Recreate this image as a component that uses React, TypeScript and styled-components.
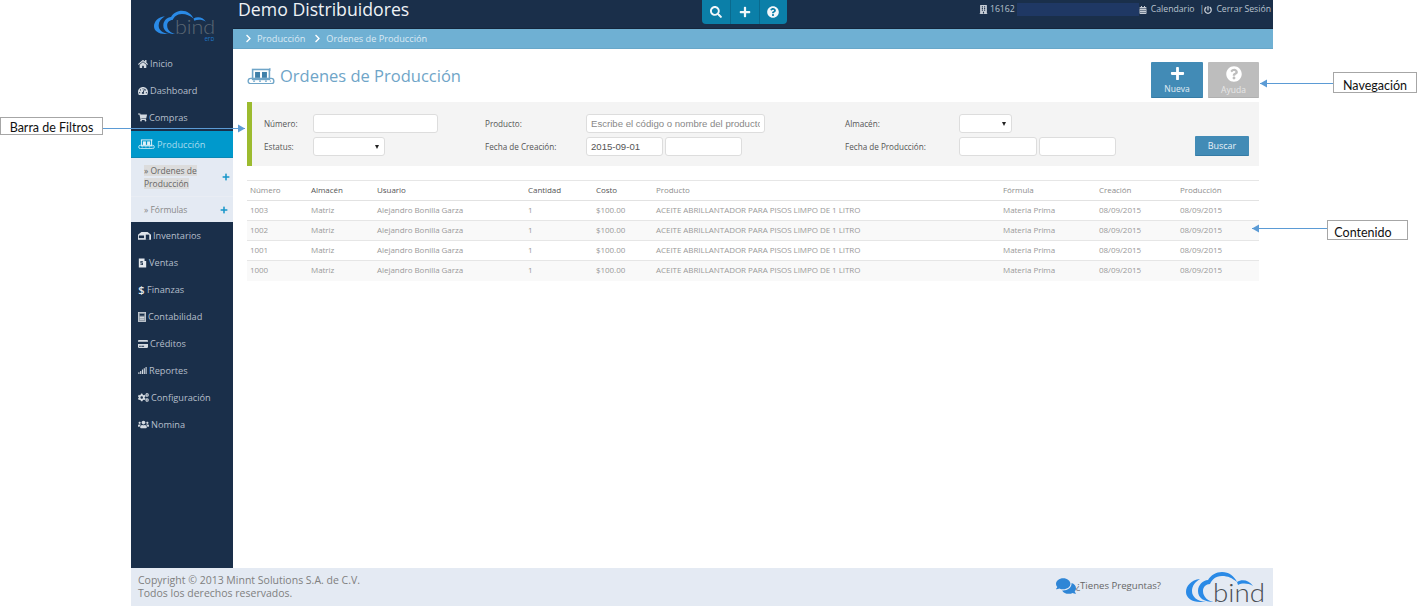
import React from "react";
import styled, { createGlobalStyle } from "styled-components";
import {
  FaHome, FaTachometerAlt, FaShoppingCart, FaCreditCard, FaSignal, FaCogs, FaUsers,
  FaSearch, FaPlus, FaQuestionCircle, FaCalendarAlt, FaPowerOff, FaChevronRight, FaComments, FaBuilding,
} from "react-icons/fa";

const Global = createGlobalStyle`
  html, body { margin: 0; padding: 0; background: #fff; overflow: hidden; }
  body { font-family: "Open Sans", "Noto Sans", sans-serif; }
  * { box-sizing: border-box; }
`;

const Page = styled.div`
  position: relative;
  width: 1417px;
  height: 606px;
  padding-left: 131px;
  overflow: hidden;
`;
const Frame = styled.div`
  width: 1142px;
  height: 606px;
  display: flex;
  flex-direction: column;
`;
const Shell = styled.div`
  flex: 1;
  display: flex;
  min-height: 0;
`;
const Sidebar = styled.nav`
  width: 102px;
  background: #1a2f4a;
  display: flex;
  flex-direction: column;
  flex-shrink: 0;
`;
const LogoBox = styled.div`
  height: 50px;
  padding: 10px 0 0 23px;
`;
const MenuItem = styled.div<{ $active?: boolean }>`
  height: 27px;
  display: flex;
  align-items: center;
  gap: 2px;
  padding-left: 7px;
  font-size: 9.2px;
  color: ${(p) => (p.$active ? "#a9dcee" : "#b6bfca")};
  background: ${(p) => (p.$active ? "#0099cc" : "transparent")};
  border-bottom: ${(p) => (p.$active ? "1px solid #0a88b5" : "none")};
  svg { flex-shrink: 0; color: #d4dae1; }
`;
const DollarMark = styled.span`
  width: 7px;
  font-size: 11px;
  font-weight: 600;
  line-height: 12px;
  text-align: center;
  color: #e4e8ed;
`;
const SubMenu = styled.div`
  height: 64px;
  background: #e4eaf3;
  display: flex;
  flex-direction: column;
`;
const SubItem = styled.div<{ $h: number; $right: number }>`
  height: ${(p) => p.$h}px;
  padding: 0 ${(p) => p.$right}px 0 13px;
  display: flex;
  align-items: center;
  justify-content: space-between;
  font-size: 8.5px;
  line-height: 13px;
  color: #7b7b7b;
  & + & { border-top: 1px solid #e9edf4; }
  svg { color: #1595c9; flex-shrink: 0; }
`;
const SubLabel = styled.span<{ $selected?: boolean }>`
  width: ${(p) => (p.$selected ? "60px" : "auto")};
  color: ${(p) => (p.$selected ? "#666" : "#888")};
  span { background: ${(p) => (p.$selected ? "#dcdcdc" : "transparent")}; }
`;
const Main = styled.main`
  flex: 1;
  min-width: 0;
  display: flex;
  flex-direction: column;
`;
const TopBar = styled.header`
  height: 29px;
  background: #1a2f4a;
  border-bottom: 1px solid #14263c;
  position: relative;
  display: flex;
  justify-content: space-between;
  padding: 0 2px 0 5px;
`;
const Brand = styled.div`
  color: #eef2f6;
  font-size: 17.7px;
  line-height: 19px;
`;
const QuickTools = styled.div`
  position: absolute;
  left: 469px;
  top: 0;
  height: 24px;
  display: flex;
  border-radius: 0 0 4px 4px;
  overflow: hidden;
  background: #0b7fa8;
`;
const QuickTool = styled.div`
  width: 28.3px;
  display: flex;
  align-items: center;
  justify-content: center;
  color: #f2f7fa;
  & + & { border-left: 1px solid #0a6a8e; }
`;
const Session = styled.div`
  display: flex;
  align-items: flex-start;
  padding-top: 3px;
  font-size: 8.7px;
  line-height: 13px;
  color: #b9c3cf;
  svg { color: #c5ccd5; }
`;
const SessionItem = styled.span<{ $gap: number }>`
  display: inline-flex;
  align-items: center;
  gap: ${(p) => p.$gap}px;
  white-space: nowrap;
`;
const Bar = styled.span`
  margin-left: 5px;
`;
const Redacted = styled.span`
  width: 122px;
  height: 13px;
  margin-left: 2px;
  background: #1f3864;
`;
const Crumbs = styled.div`
  height: 20px;
  background: #6fb0d3;
  border-bottom: 1px solid #68a6c8;
  display: flex;
  align-items: center;
  gap: 4px;
  padding-left: 11px;
  font-size: 9.2px;
  color: #dceaf3;
  svg { color: #fff; }
`;
const Crumb = styled.span`
  margin-right: 4px;
`;
const Content = styled.div`
  padding: 13px 14px 0 14px;
  flex: 1;
`;
const TitleRow = styled.div`
  height: 40px;
  display: flex;
  justify-content: space-between;
  align-items: flex-start;
`;
const Title = styled.h1`
  margin: 0;
  display: flex;
  align-items: center;
  gap: 5px;
  font-size: 16.5px;
  font-weight: 400;
  line-height: 28px;
  color: #6fa5c8;
`;
const Actions = styled.div`
  display: flex;
  gap: 5px;
`;
const ActionButton = styled.div<{ $tone: "blue" | "gray" }>`
  width: ${(p) => (p.$tone === "blue" ? "52px" : "51px")};
  height: 36px;
  border-radius: 1px;
  background: ${(p) => (p.$tone === "blue" ? "#428bb6" : "#bdbdbd")};
  border-bottom: 1px solid ${(p) => (p.$tone === "blue" ? "#357ba5" : "#b0b0b0")};
  color: #fff;
  display: flex;
  flex-direction: column;
  align-items: center;
  padding-top: 4px;
  font-size: 8.5px;
  line-height: 12px;
  span { margin-top: 2px; color: ${(p) => (p.$tone === "blue" ? "#e3eef5" : "#e8e8e8")}; }
`;
const FilterBar = styled.section`
  height: 64px;
  background: #f4f4f4;
  border-left: 5px solid #9cbb2f;
  display: grid;
  grid-template-columns: 48.5px 172.5px 101px 259px 114px 236px 54px;
  grid-template-rows: 19px 19px;
  row-gap: 4px;
  align-content: center;
  padding: 2px 0 0 12px;
`;
const FilterLabel = styled.label`
  font-size: 8.15px;
  color: #555;
  display: flex;
  align-items: center;
`;
const Field = styled.div`
  display: flex;
  gap: 2px;
`;
const TextBox = styled.input<{ $w: number }>`
  width: ${(p) => p.$w}px;
  height: 19px;
  padding: 0 4px;
  background: #fff;
  border: 1px solid #ddd;
  border-radius: 3px;
  font-family: "Liberation Sans", Arial, sans-serif;
  font-size: 9.6px;
  color: #555;
  outline: none;
  &::placeholder { color: #888; opacity: 1; }
`;
const SelectBox = styled.div<{ $w: number }>`
  width: ${(p) => p.$w}px;
  height: 19px;
  background: #fff;
  border: 1px solid #ddd;
  border-radius: 3px;
  display: flex;
  align-items: center;
  justify-content: flex-end;
  padding-right: 5px;
  &::after {
    content: "";
    border-left: 2.5px solid transparent;
    border-right: 2.5px solid transparent;
    border-top: 4px solid #222;
  }
`;
const SearchButton = styled.div`
  width: 54px;
  height: 20px;
  margin-top: -1px;
  background: #428bb6;
  border-bottom: 1px solid #357ba5;
  color: #e8f1f6;
  border-radius: 1px;
  font-size: 9px;
  display: flex;
  align-items: center;
  justify-content: center;
`;
const Table = styled.div`
  margin-top: 14px;
  border-top: 1px solid #e6e6e6;
`;
const Row = styled.div<{ $striped?: boolean; $head?: boolean }>`
  height: 20px;
  display: grid;
  grid-template-columns: 61px 66px 151px 68px 60px 347px 96px 81px 82px;
  align-items: center;
  background: ${(p) => (p.$striped ? "#f9f9f9" : "#fff")};
  border-bottom: 1px solid ${(p) => (p.$head ? "#e2e2e2" : "#e6e6e6")};
  &:last-child { border-bottom-color: transparent; }
`;
const Cell = styled.div<{ $strong?: boolean; $head?: boolean }>`
  padding: 0 0 2px 3px;
  font-size: 8px;
  line-height: 11px;
  letter-spacing: -0.05px;
  white-space: nowrap;
  color: ${(p) => (p.$strong ? "#555" : p.$head ? "#8e8e8e" : "#999")};
`;
const Footer = styled.footer`
  height: 38px;
  background: #e4eaf3;
  flex-shrink: 0;
  display: flex;
  align-items: center;
  justify-content: space-between;
  padding: 0 7px;
`;
const Legal = styled.div`
  font-size: 10.5px;
  line-height: 13.5px;
  color: #808080;
`;
const Help = styled.div`
  display: flex;
  align-items: center;
  gap: 25px;
`;
const Question = styled.div`
  display: flex;
  align-items: center;
  font-size: 9.6px;
  color: #666;
  margin-top: -3px;
  svg { color: #2f86d6; }
`;
const Callout = styled.div<{ $x: number; $y: number; $w: number; $h: number; $shift?: number }>`
  position: absolute;
  left: ${(p) => p.$x}px;
  top: ${(p) => p.$y}px;
  width: ${(p) => p.$w}px;
  height: ${(p) => p.$h}px;
  background: #fff;
  border: 1px solid #a6a6a6;
  display: flex;
  align-items: flex-end;
  justify-content: center;
  padding-right: ${(p) => p.$shift ?? 0}px;
  font-family: "Lato", "Open Sans", sans-serif;
  font-size: 12.5px;
  line-height: 13px;
  color: #111;
`;
const ArrowLine = styled.svg<{ $x: number; $y: number }>`
  position: absolute;
  left: ${(p) => p.$x}px;
  top: ${(p) => p.$y}px;
`;

const CloudLogo = ({ w, h, ink, erp }: { w: number; h: number; ink: string; erp?: boolean }) => (
  <svg width={w} height={h} viewBox={`0 0 80 ${erp ? 40 : 33}`} aria-hidden>
    <path d="M14 8C5 9 0 15 0 21c0 6 6 10 14 10h6C11 30 6 26 6 20c0-5 3-9 8-12z" fill="#2a8ae6" />
    <path d="M28 31c-10 0-16-4-16-11 0-6 5-11 10-11 3-5 8-8 14-8 7 0 12 4 15 10-5-4-9-6-15-6-7 0-10 4-12 8-4 0-7 3-7 7 0 6 5 10 11 11z" fill="#2a8ae6" />
    <path d="M51 11c5-3 12-2 16 4-5-3-11-3-15-1z" fill="#2a8ae6" />
    <text x="27" y="31" fontFamily="Lato, 'Open Sans', sans-serif" fontWeight="300" fontSize="26" textLength="52" lengthAdjust="spacingAndGlyphs" fill={ink}>bind</text>
    {erp && <text x="65" y="39.5" fontFamily="'Open Sans', sans-serif" fontSize="8" fill="#1f74c4">erp</text>}
  </svg>
);

const FactoryIcon = ({ w, color, window: win }: { w: number; color: string; window: string }) => (
  <svg width={w} height={w * 0.6} viewBox="0 0 28 17" aria-hidden>
    <rect x="5.5" y="1.5" width="17" height="10" fill="none" stroke={color} strokeWidth="1.6" />
    <rect x="8" y="4" width="5" height="6" fill={win} />
    <rect x="15" y="4" width="5" height="6" fill={win} />
    <rect x="1" y="10.5" width="26" height="5.5" rx="2.7" fill="none" stroke={color} strokeWidth="1.4" />
    <path d="M6 13.2h2M12 13.2h2M18 13.2h2M23 13.2h1" stroke={color} strokeWidth="1.2" />
    <path d="M23 0v3" stroke={color} strokeWidth="1" />
  </svg>
);

const TruckIcon = () => (
  <svg width="13" height="9" viewBox="0 0 15 10" aria-hidden>
    <path d="M0 4l4-3h7l4 3v6H0z" fill="#dfe4ea" />
    <rect x="1" y="5" width="6" height="3" fill="#1a2f4a" />
    <rect x="9" y="4" width="4" height="6" fill="#1a2f4a" />
  </svg>
);
const ReceiptIcon = () => (
  <svg width="9" height="10" viewBox="0 0 11 11" aria-hidden>
    <path d="M1 0h7v3h2v8H1z" fill="#e4e8ed" />
    <path d="M3 3h3v1H4v1h2v3H3V7h2V6H3z" fill="#1a2f4a" />
  </svg>
);
const LedgerIcon = () => (
  <svg width="8" height="10" viewBox="0 0 9 11" aria-hidden>
    <rect x=".5" y=".5" width="8" height="10" fill="#8f9aa6" stroke="#c8ced5" />
    <rect x="2" y="2" width="5" height="2" fill="#1a2f4a" />
    <path d="M2 6h5M2 8h5" stroke="#dfe3e8" />
  </svg>
);

const rows = ["1003", "1002", "1001", "1000"];
const first = [
  { icon: <FaHome size={10} />, label: "Inicio" },
  { icon: <FaTachometerAlt size={10} />, label: "Dashboard" },
  { icon: <FaShoppingCart size={9} />, label: "Compras" },
];
const second = [
  { icon: <TruckIcon />, label: "Inventarios" },
  { icon: <ReceiptIcon />, label: "Ventas" },
  { icon: <DollarMark>$</DollarMark>, label: "Finanzas" },
  { icon: <LedgerIcon />, label: "Contabilidad" },
  { icon: <FaCreditCard size={10} />, label: "Créditos" },
  { icon: <FaSignal size={9} />, label: "Reportes" },
  { icon: <FaCogs size={11} />, label: "Configuración" },
  { icon: <FaUsers size={11} />, label: "Nomina" },
];

const Arrow = ({ x, y, w, dir }: { x: number; y: number; w: number; dir: "left" | "right" }) => (
  <ArrowLine $x={x} $y={y} width={w} height="9" viewBox={`0 0 ${w} 9`} aria-hidden>
    <line x1="0" y1="4.5" x2={w} y2="4.5" stroke="#5b9bd5" strokeWidth="1" />
    {dir === "right"
      ? <path d={`M${w} 4.5l-7-4v8z`} fill="#5b9bd5" />
      : <path d="M0 4.5l7-4v8z" fill="#5b9bd5" />}
  </ArrowLine>
);

export default function App() {
  return (
    <Page>
      <Global />
      <Frame>
        <Shell>
          <Sidebar>
            <LogoBox><CloudLogo w={62} h={31} ink="#5b6774" erp /></LogoBox>
            {first.map((m) => <MenuItem key={m.label}>{m.icon}{m.label}</MenuItem>)}
            <MenuItem $active><FactoryIcon w={17} color="#dff1f8" window="#dff1f8" />Producción</MenuItem>
            <SubMenu>
              <SubItem $h={38} $right={3}>
                <SubLabel $selected><span>» Ordenes de Producción</span></SubLabel>
                <FaPlus size={8} />
              </SubItem>
              <SubItem $h={26} $right={5}>
                <SubLabel>» Fórmulas</SubLabel>
                <FaPlus size={8} />
              </SubItem>
            </SubMenu>
            {second.map((m) => <MenuItem key={m.label}>{m.icon}{m.label}</MenuItem>)}
          </Sidebar>
          <Main>
            <TopBar>
              <Brand>Demo Distribuidores</Brand>
              <QuickTools>
                <QuickTool><FaSearch size={12} /></QuickTool>
                <QuickTool><FaPlus size={12} /></QuickTool>
                <QuickTool><FaQuestionCircle size={12} /></QuickTool>
              </QuickTools>
              <Session>
                <SessionItem $gap={2}><FaBuilding size={9} />16162</SessionItem>
                <Redacted />
                <SessionItem $gap={4}><FaCalendarAlt size={8} />Calendario</SessionItem>
                <Bar>|</Bar>
                <SessionItem $gap={4}><FaPowerOff size={8} />Cerrar Sesión</SessionItem>
              </Session>
            </TopBar>
            <Crumbs>
              <FaChevronRight size={9} /><Crumb>Producción</Crumb>
              <FaChevronRight size={9} /><Crumb>Ordenes de Producción</Crumb>
            </Crumbs>
            <Content>
              <TitleRow>
                <Title><FactoryIcon w={28} color="#6fa5c8" window="#3f7fa8" />Ordenes de Producción</Title>
                <Actions>
                  <ActionButton $tone="blue"><FaPlus size={15} /><span>Nueva</span></ActionButton>
                  <ActionButton $tone="gray"><FaQuestionCircle size={16} /><span>Ayuda</span></ActionButton>
                </Actions>
              </TitleRow>
              <FilterBar>
                <FilterLabel>Número:</FilterLabel>
                <Field><TextBox $w={125} /></Field>
                <FilterLabel>Producto:</FilterLabel>
                <Field><TextBox $w={179} placeholder="Escribe el código o nombre del producto" /></Field>
                <FilterLabel>Almacén:</FilterLabel>
                <Field><SelectBox $w={53} /></Field>
                <div />
                <FilterLabel>Estatus:</FilterLabel>
                <Field><SelectBox $w={72} /></Field>
                <FilterLabel>Fecha de Creación:</FilterLabel>
                <Field><TextBox $w={77} defaultValue="2015-09-01" /><TextBox $w={77} /></Field>
                <FilterLabel>Fecha de Producción:</FilterLabel>
                <Field><TextBox $w={78} /><TextBox $w={77} /></Field>
                <SearchButton>Buscar</SearchButton>
              </FilterBar>
              <Table>
                <Row $head>
                  <Cell $head>Número</Cell>
                  <Cell $strong>Almacén</Cell>
                  <Cell $strong>Usuario</Cell>
                  <Cell $strong>Cantidad</Cell>
                  <Cell $strong>Costo</Cell>
                  <Cell $head>Producto</Cell>
                  <Cell $head>Fórmula</Cell>
                  <Cell $head>Creación</Cell>
                  <Cell $head>Producción</Cell>
                </Row>
                {rows.map((n, i) => (
                  <Row key={n} $striped={i % 2 === 1}>
                    <Cell>{n}</Cell>
                    <Cell>Matriz</Cell>
                    <Cell>Alejandro Bonilla Garza</Cell>
                    <Cell>1</Cell>
                    <Cell>$100.00</Cell>
                    <Cell>ACEITE ABRILLANTADOR PARA PISOS LIMPO DE 1 LITRO</Cell>
                    <Cell>Materia Prima</Cell>
                    <Cell>08/09/2015</Cell>
                    <Cell>08/09/2015</Cell>
                  </Row>
                ))}
              </Table>
            </Content>
          </Main>
        </Shell>
        <Footer>
          <Legal>Copyright © 2013 Minnt Solutions S.A. de C.V.<br />Todos los derechos reservados.</Legal>
          <Help>
            <Question><FaComments size={20} />¿Tienes Preguntas?</Question>
            <CloudLogo w={80} h={33} ink="#4a4f55" />
          </Help>
        </Footer>
      </Frame>
      <Arrow x={102} y={124} w={143} dir="right" />
      <Arrow x={1260} y={79} w={73} dir="left" />
      <Arrow x={1252} y={224} w={75} dir="left" />
      <Callout $x={0} $y={117} $w={103} $h={18}>Barra de Filtros</Callout>
      <Callout $x={1333} $y={72} $w={84} $h={21}>Navegación</Callout>
      <Callout $x={1327} $y={220} $w={81} $h={20} $shift={9}>Contenido</Callout>
    </Page>
  );
}
